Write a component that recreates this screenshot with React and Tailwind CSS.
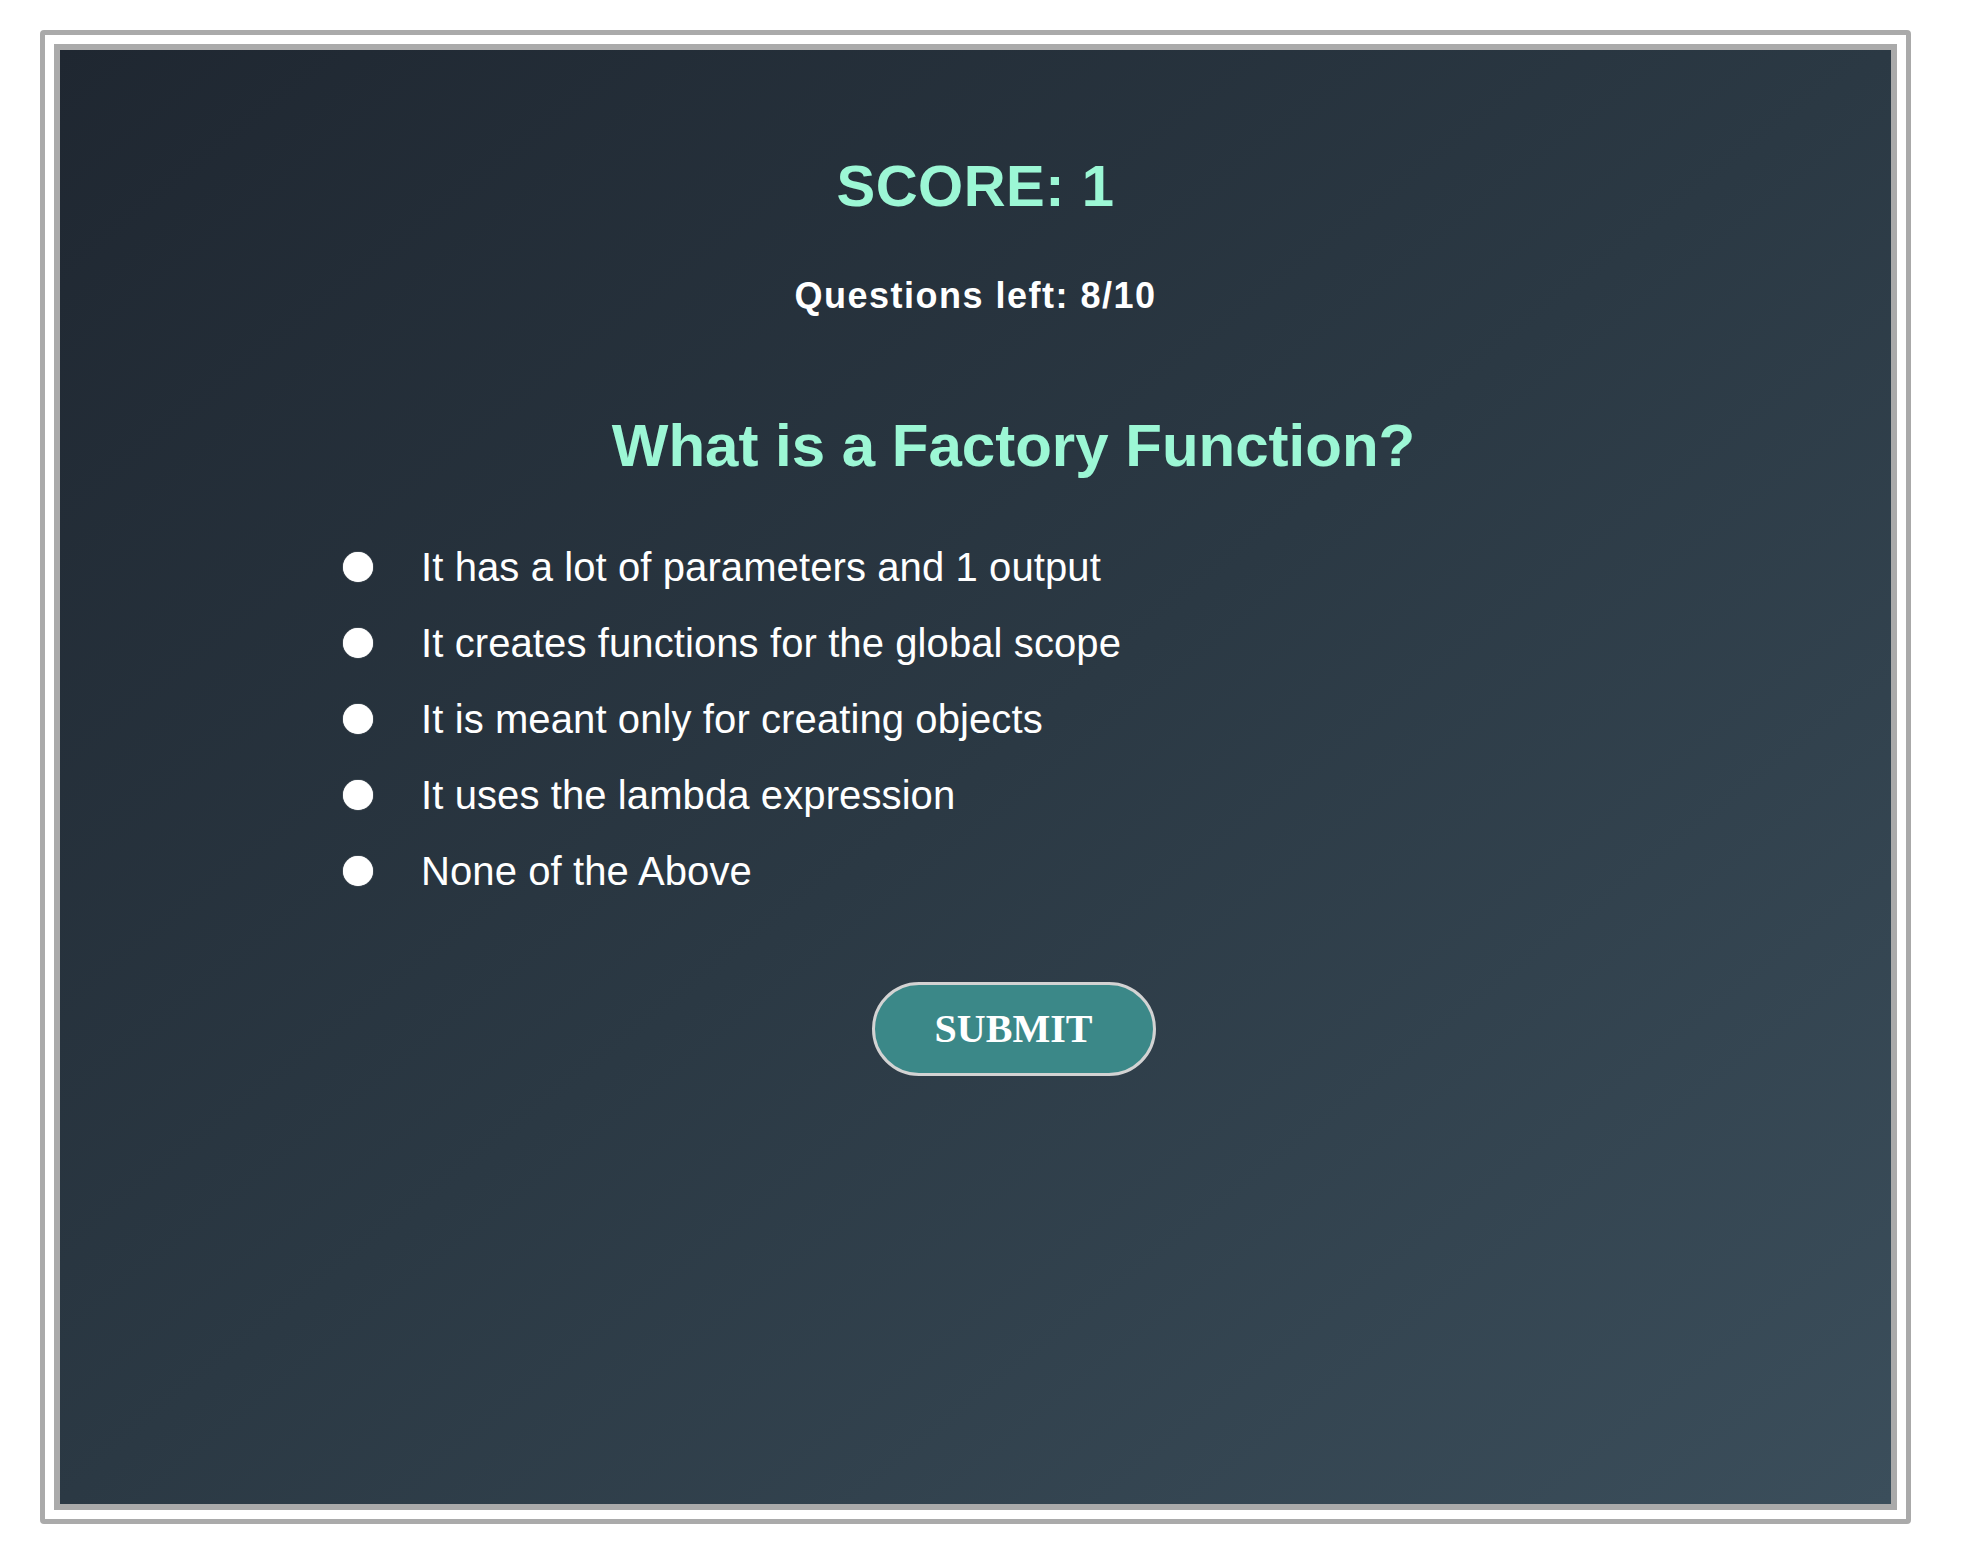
const options = [
  "It has a lot of parameters and 1 output",
  "It creates functions for the global scope",
  "It is meant only for creating objects",
  "It uses the lambda expression",
  "None of the Above",
];

export default function App() {
  return (
    <div className="min-h-screen bg-white pt-[30px] pl-[40px]">
      <div className="w-[1871px] rounded-[4px] border-[5px] border-[#aaaaaa] p-[9px]">
        <div className="h-[1466px] border-[6px] border-[#aaaaaa] bg-linear-to-br from-[#1f2731] via-[#2b3944] to-[#3b4e5b] font-['Liberation_Sans',Arial,sans-serif] text-white">
          <h1 className="pt-[107px] text-center text-[58px] font-bold leading-none tracking-[0.5px] text-[#9cf7d5]">
            SCORE: 1
          </h1>
          <p className="mt-[63px] text-center text-[36px] font-bold leading-none tracking-[1.5px]">
            Questions left: 8/10
          </p>

          <section className="pl-[76px]">
            <h2 className="mt-[102px] text-center text-[60px] font-bold leading-none text-[#9cf7d5]">
              What is a Factory Function?
            </h2>

            <ul className="mt-[53px] ml-[207px]">
              {options.map((opt) => (
                <li key={opt} className="flex h-[76px] items-center">
                  <span className="h-[30px] w-[30px] shrink-0 rounded-full bg-white shadow-[0_0_1px_#fff]" />
                  <span className="ml-[48px] text-[40px] leading-none tracking-[0.1px]">{opt}</span>
                </li>
              ))}
            </ul>

            <div className="mt-[73px] flex justify-center">
              <button className="h-[94px] w-[284px] rounded-full border-[3px] border-[#d3d3d3] bg-[#3b8888] font-['Liberation_Serif',serif] text-[40px] font-bold text-white">
                SUBMIT
              </button>
            </div>
          </section>
        </div>
      </div>
    </div>
  );
}
